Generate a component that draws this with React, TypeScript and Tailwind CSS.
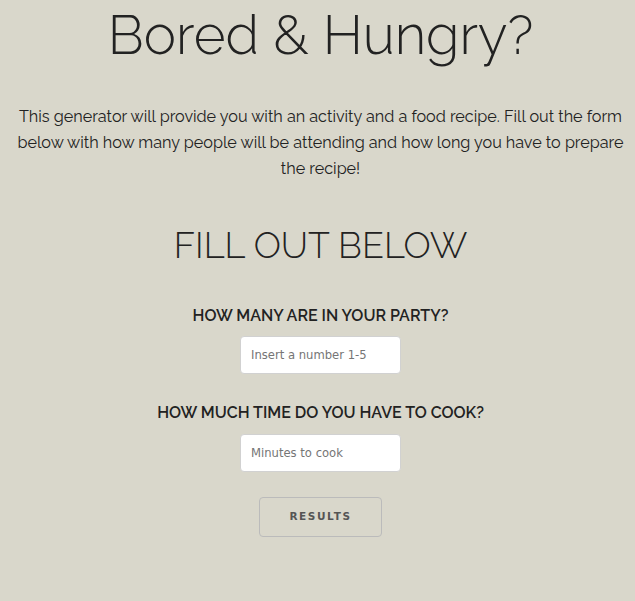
export default function App() {
  return (
    <div className="min-h-[601px] bg-[#d9d7cb] text-[#222] font-['Raleway','Lato',sans-serif] text-center pl-[16px] pr-[10px]">
      <h1 className="text-[54.5px] font-light leading-none pt-[8px]">Bored &amp; Hungry?</h1>
      <p className="text-[16.2px] leading-[26px] mt-[41px]">
        This generator will provide you with an activity and a food recipe. Fill out the form below with how many people will be attending and how long you have to prepare the recipe!
      </p>
      <h2 className="text-[36px] font-light leading-none mt-[45px]">FILL OUT BELOW</h2>
      <form className="flex flex-col items-center mt-[43px]">
        <label className="text-[16px] font-semibold leading-[20px]">HOW MANY ARE IN YOUR PARTY?</label>
        <input
          type="text"
          placeholder="Insert a number 1-5"
          className="mt-[10px] w-[161px] h-[38px] bg-white rounded-[4px] border border-[#d1d1d1] px-[10px] text-[11.6px] font-['DejaVu_Sans',sans-serif] placeholder:text-[#757575] focus:outline-none"
        />
        <label className="text-[16px] font-semibold leading-[20px] mt-[29px]">HOW MUCH TIME DO YOU HAVE TO COOK?</label>
        <input
          type="text"
          placeholder="Minutes to cook"
          className="mt-[11px] w-[161px] h-[38px] bg-white rounded-[4px] border border-[#d1d1d1] px-[10px] text-[11.6px] font-['DejaVu_Sans',sans-serif] placeholder:text-[#757575] focus:outline-none"
        />
        <button
          type="button"
          className="mt-[25px] w-[123px] h-[40px] rounded-[4px] border border-[#bbb] text-[10.5px] font-bold tracking-[0.1rem] text-[#555] font-['DejaVu_Sans',sans-serif]"
        >
          RESULTS
        </button>
      </form>
    </div>
  )
}
